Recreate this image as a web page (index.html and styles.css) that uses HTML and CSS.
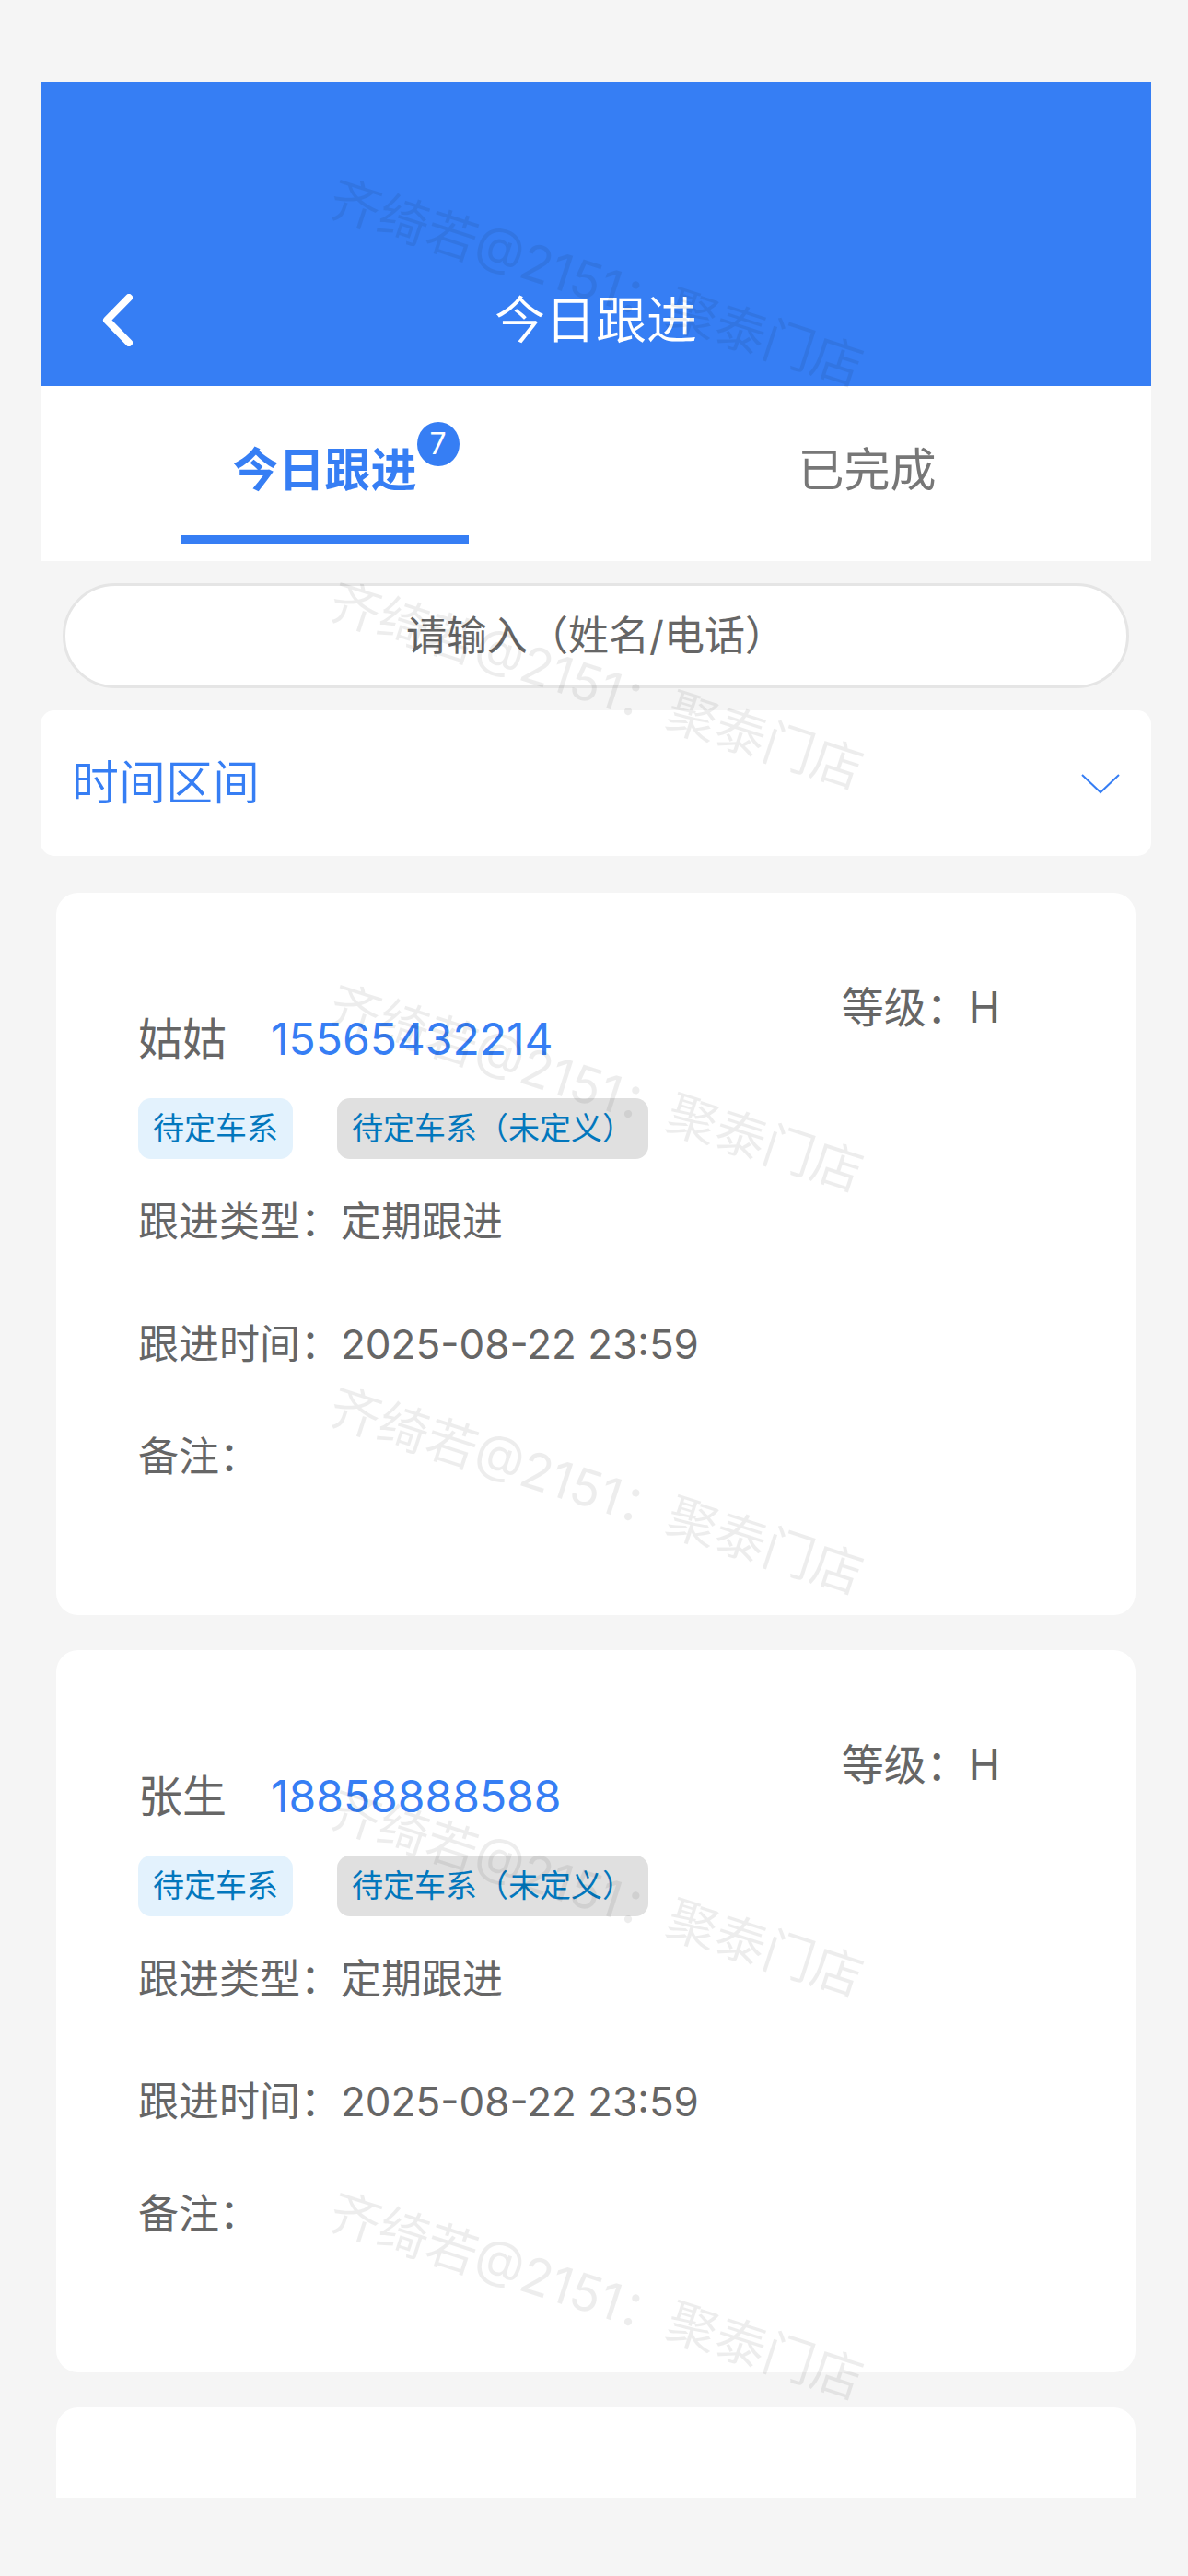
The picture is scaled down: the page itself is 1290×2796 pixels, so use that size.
FILE: index.html
```html
<!DOCTYPE html>
<html lang="zh-CN">
<head>
    <meta charset="UTF-8">
    <meta name="viewport" content="width=device-width, initial-scale=1.0">
    <title>今日跟进</title>
    <link rel="stylesheet" href="styles.css">
</head>
<body>
    <main class="app">
        <header class="header">
            <button class="back" type="button" aria-label="返回">
                <svg viewBox="0 0 33 57" width="33" height="57">
                    <path d="M29 4 L5 28.5 L29 53" fill="none" stroke="#fff" stroke-width="8" stroke-linecap="round" stroke-linejoin="round"/>
                </svg>
            </button>
            <h1>今日跟进</h1>
        </header>

        <nav class="tabs">
            <button class="tab active" type="button">
                <span class="tab-label">今日跟进<span class="badge">7</span></span>
            </button>
            <button class="tab" type="button">
                <span class="tab-label">已完成</span>
            </button>
        </nav>

        <form class="search">
            <input type="text" aria-label="搜索" placeholder="请输入（姓名/电话）">
        </form>

        <button class="range" type="button">
            <span>时间区间</span>
            <svg viewBox="0 0 42 24" width="42" height="24">
                <path d="M1 3 L21 22 L41 3" fill="none" stroke="#367ef4" stroke-width="2"/>
            </svg>
        </button>

        <section class="list">
            <article class="card">
                <div class="card-head">
                    <div class="person">
                        <span>姑姑</span>
                        <a href="tel:15565432214">15565432214</a>
                    </div>
                    <span class="level">等级：H</span>
                </div>
                <div class="tags">
                    <span class="tag">待定车系</span>
                    <span class="tag gray">待定车系（未定义）</span>
                </div>
                <p class="row">跟进类型：定期跟进</p>
                <p class="row time">跟进时间：2025-08-22 23:59</p>
                <p class="row note">备注：</p>
            </article>

            <article class="card">
                <div class="card-head">
                    <div class="person">
                        <span>张生</span>
                        <a href="tel:18858888588">18858888588</a>
                    </div>
                    <span class="level">等级：H</span>
                </div>
                <div class="tags">
                    <span class="tag">待定车系</span>
                    <span class="tag gray">待定车系（未定义）</span>
                </div>
                <p class="row">跟进类型：定期跟进</p>
                <p class="row time">跟进时间：2025-08-22 23:59</p>
                <p class="row note">备注：</p>
            </article>

            <article class="card"></article>
        </section>

        <!-- watermark -->
        <div class="watermark" aria-hidden="true">
            <span>齐绮若@2151：聚泰门店</span>
            <span>齐绮若@2151：聚泰门店</span>
            <span>齐绮若@2151：聚泰门店</span>
            <span>齐绮若@2151：聚泰门店</span>
            <span>齐绮若@2151：聚泰门店</span>
            <span>齐绮若@2151：聚泰门店</span>
        </div>
    </main>
</body>
</html>
```

FILE: styles.css
```css
*{
    box-sizing: border-box;
}

body{
    margin: 0;
    height: 100vh;
    padding: 89px 40px 85px 44px;
    background-color: #f5f5f5;
    font-family: Inter, "Noto Sans CJK SC", sans-serif;
    font-size: 44px;
    color: #666;
}

button{
    border: none;
    padding: 0;
    background: none;
    font-family: inherit;
    color: inherit;
    cursor: pointer;
}

.app{
    position: relative;
    display: flex;
    flex-direction: column;
    height: 100%;
    overflow: hidden;
}

/* header */

.header{
    display: grid;
    grid-template-columns: 160px 1fr 160px;
    align-items: center;
    padding-top: 186px;
    background-color: #367ef4;
    color: white;
}

.back{
    display: flex;
    padding-left: 67px;
}

h1{
    margin: 0;
    font-size: 55px;
    font-weight: 350;
    line-height: 144px;
    text-align: center;
}

/* tabs */

.tabs{
    display: flex;
    padding: 46px 14px 18px;
    background-color: white;
}

.tab{
    flex: 1;
    display: flex;
    flex-direction: column;
    align-items: center;
    font-size: 50px;
    line-height: 90px;
    color: #777;
}

.tab::after{
    content: "";
    width: 53%;
    height: 10px;
    margin-top: 26px;
}

.tab.active{
    font-weight: bold;
    color: #367ef4;
}

.tab.active::after{
    background-color: #367ef4;
}

.tab-label{
    position: relative;
}

.badge{
    position: absolute;
    top: -7px;
    left: 100%;
    width: 46px;
    height: 48px;
    border-radius: 50%;
    background-color: #367ef4;
    color: white;
    font-size: 32px;
    font-weight: 400;
    line-height: 48px;
    text-align: center;
}

/* search */

.search{
    padding: 24px;
}

.search input{
    display: block;
    width: 100%;
    height: 114px;
    border: 3px solid #e5e5e5;
    border-radius: 57px;
    background-color: white;
    font-family: inherit;
    font-size: 44px;
    text-align: center;
}

.search input::placeholder{
    color: #666;
}

.range{
    display: flex;
    justify-content: space-between;
    align-items: center;
    padding: 0 34px;
    border-radius: 15px;
    background-color: white;
    font-size: 51px;
    font-weight: 350;
    line-height: 158px;
    color: #367ef4;
}

/* cards */

.list{
    flex: 1;
    min-height: 0;
    overflow: hidden;
    padding: 40px 17px 0;
}

.card{
    min-height: 784px;
    margin-bottom: 38px;
    padding: 89px 89px 142px;
    border-radius: 24px;
    background-color: white;
}

.card-head{
    display: flex;
    justify-content: space-between;
    height: 105px;
    line-height: 70px;
}

.person{
    display: flex;
    gap: 48px;
    align-self: flex-end;
    font-size: 48px;
}

.person a{
    color: #367ef4;
    text-decoration: none;
}

.level{
    margin-right: 58px;
    font-size: 46px;
}

.tags{
    display: flex;
    gap: 48px;
    margin-top: 29px;
}

.tag{
    padding: 0 16px;
    border-radius: 14px;
    background-color: #e3f2fd;
    color: #0277bd;
    font-size: 34px;
    line-height: 66px;
}

.tag.gray{
    background-color: #e0e0e0;
}

.row{
    margin: 38px 0 0;
    line-height: 60px;
}

.row.time{
    margin-top: 73px;
}

.row.note{
    margin-top: 62px;
}

/* watermark */

.watermark{
    position: absolute;
    inset: 0;
    display: grid;
    grid-template-rows: repeat(6, 1fr);
    place-items: center;
    font-size: 55px;
    color: rgba(0, 0, 0, 0.07);
    pointer-events: none;
}

.watermark span{
    padding-bottom: 10px;
    transform: rotate(18deg);
}
```
